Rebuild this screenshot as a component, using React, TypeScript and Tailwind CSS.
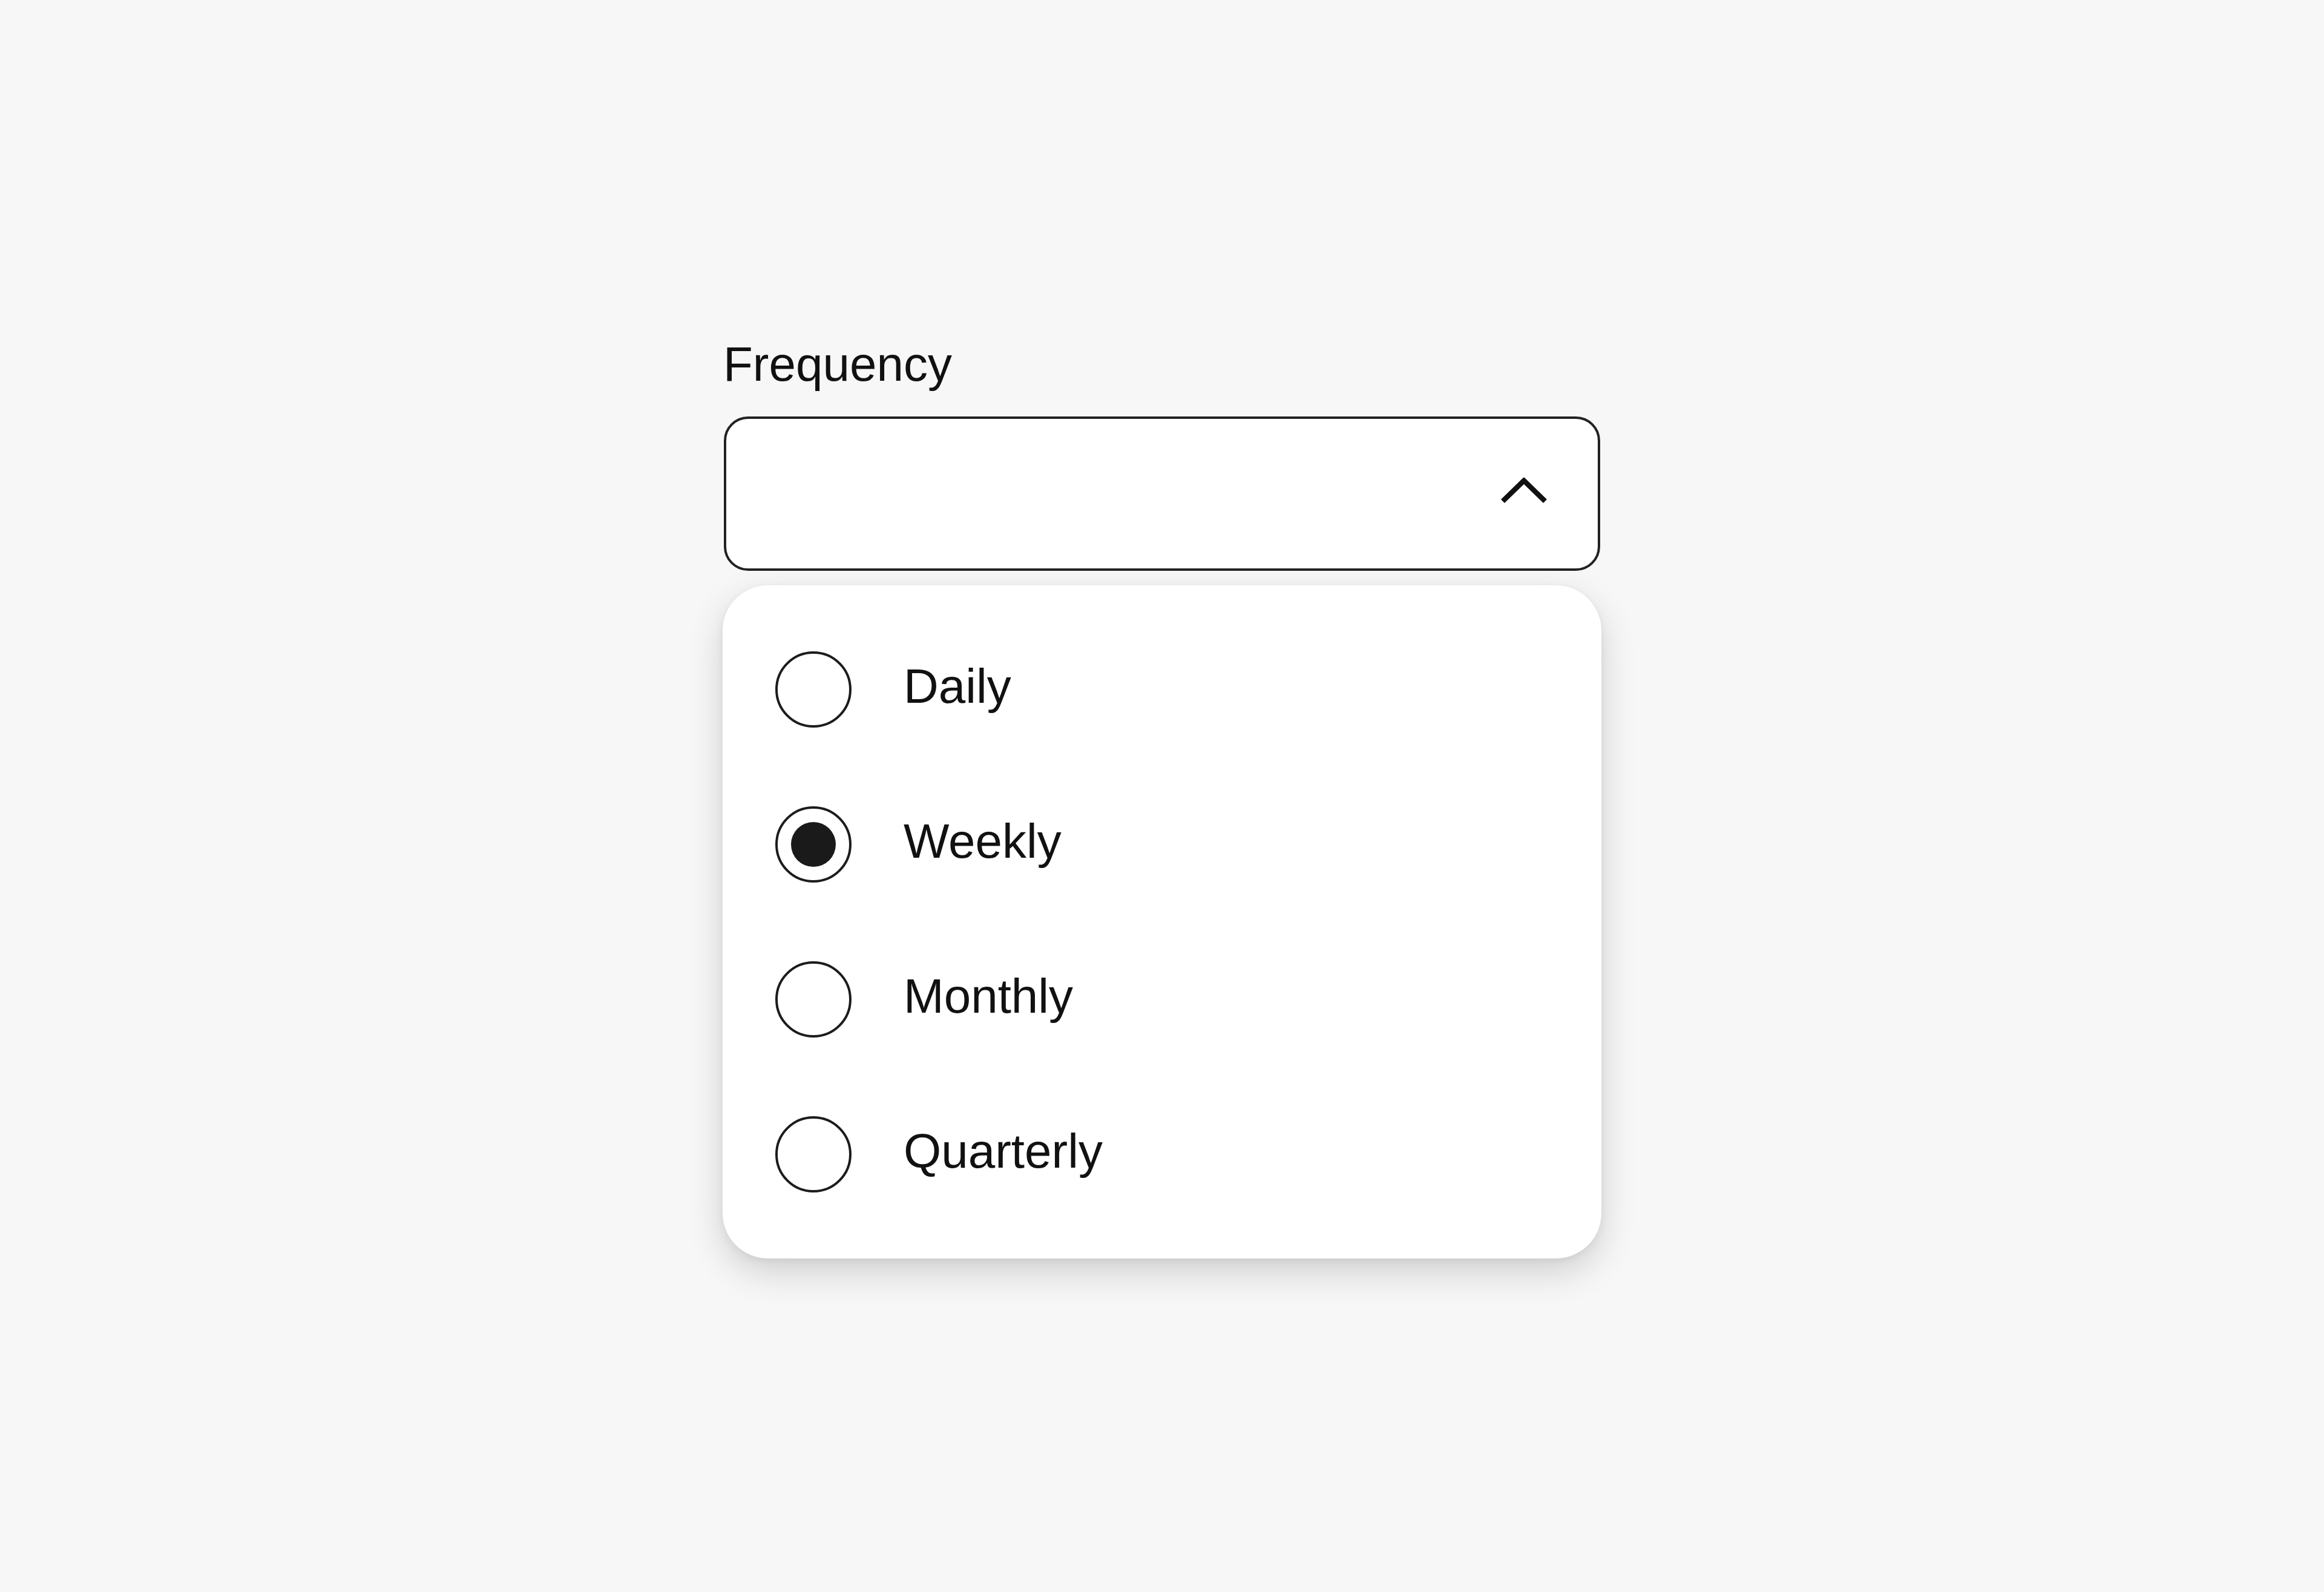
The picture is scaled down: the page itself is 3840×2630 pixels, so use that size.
import React from "react";

const options = [
  { label: "Daily", checked: false },
  { label: "Weekly", checked: true },
  { label: "Monthly", checked: false },
  { label: "Quarterly", checked: false },
];

function Radio({ checked }: { checked: boolean }) {
  return (
    <div className="w-[126px] h-[126px] shrink-0 rounded-full border-[4px] border-[#1c1c1c] bg-white flex items-center justify-center">
      {checked && <div className="w-[74px] h-[74px] rounded-full bg-[#1a1a1a]" />}
    </div>
  );
}

export default function App() {
  return (
    <div
      className="w-full h-[2630px] bg-[#f7f7f7] flex justify-center pt-[554px]"
      style={{ fontFamily: '"Liberation Sans", Arial, sans-serif' }}
    >
      <div className="w-[1452px] flex flex-col">
        <div className="text-[80px] leading-[96px] text-[#111111] mb-[38px] pl-[1px]">Frequency</div>
        <div className="h-[255px] mx-[2px] rounded-[40px] border-[4px] border-[#222222] bg-white flex items-center justify-end pr-[82px] pb-[10px]">
          <svg width="80" height="44" viewBox="0 0 80 44" fill="none">
            <polyline
              points="5,39 40,5 75,39"
              stroke="#111111"
              strokeWidth="8.5"
              strokeLinecap="butt"
              strokeLinejoin="miter"
            />
          </svg>
        </div>
        <div className="mt-[24px] rounded-[75px] bg-white py-[44px] shadow-[0_22px_60px_rgba(0,0,0,0.16),0_4px_14px_rgba(0,0,0,0.06)]">
          {options.map((o) => (
            <div key={o.label} className="h-[256px] flex items-center pl-[87px]">
              <Radio checked={o.checked} />
              <span className="ml-[86px] mb-[10px] text-[80px] leading-none text-[#111111]">{o.label}</span>
            </div>
          ))}
        </div>
      </div>
    </div>
  );
}
